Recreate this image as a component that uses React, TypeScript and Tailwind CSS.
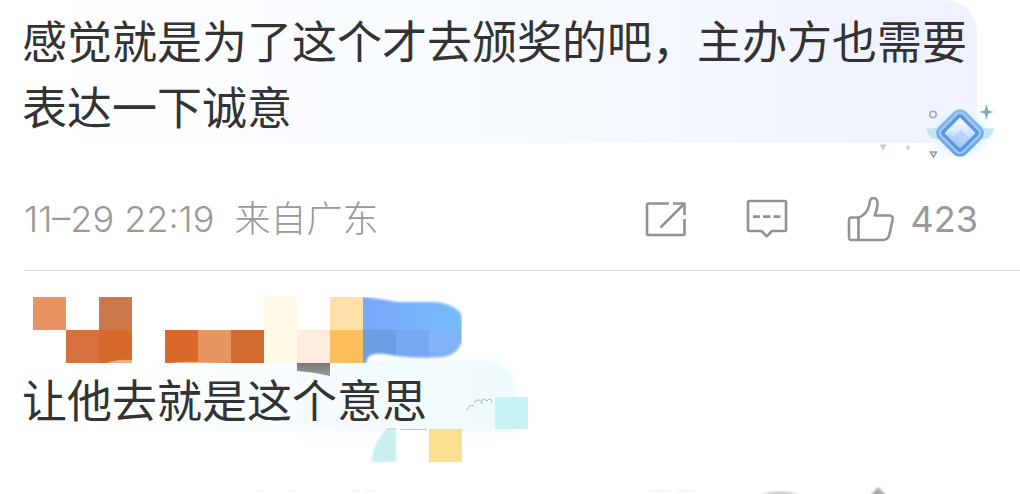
const actionButton = "flex items-center text-[#929292]";
const actionButtonWithCount = "flex items-center gap-4 text-[#929292]";
const commentText = "relative font-['Noto_Sans_CJK_SC',sans-serif] text-[45px] leading-[66px]";

function RepostIcon() {
  return (
    <svg width="42" height="36" viewBox="0 0 42 36" fill="none" stroke="currentColor" strokeWidth="2.6" strokeLinejoin="round" aria-hidden="true">
      <path d="M24 2.5H3.2Q2 2.5 2 3.7V32.8Q2 34 3.2 34H38.3Q39.5 34 39.5 32.8V18" />
      <path d="M28 2.5H39.5V14M38.5 3.5L15.5 26.5" />
    </svg>
  );
}

function CommentIcon() {
  return (
    <svg width="42" height="40" viewBox="0 0 42 40" fill="none" stroke="currentColor" strokeWidth="2.6" strokeLinejoin="round" aria-hidden="true">
      <path d="M3.5 2H38.5Q40 2 40 3.5V30.5Q40 32 38.5 32H26L20.7 37.3L15.5 32H3.5Q2 32 2 30.5V3.5Q2 2 3.5 2Z" />
      <path d="M7 17.6H14M17 17.6H24.5M27.5 17.6H34.5" />
    </svg>
  );
}

function LikeIcon() {
  return (
    <svg width="48" height="46" viewBox="0 0 48 46" fill="none" stroke="currentColor" strokeWidth="2.6" strokeLinejoin="round" aria-hidden="true">
      <path d="M4.5 21.5H11.5Q20 18.5 22 9.5L23 5Q23.6 2 26.5 2Q31 2.3 30.6 8Q30.2 13.5 27.8 19.5H42.5Q46.3 19.7 45.6 24L42.4 38.5Q41 44 36 44H4.5Q2 44 2 41.5V24Q2 21.5 4.5 21.5ZM11.5 21.5V44" />
    </svg>
  );
}

function GemBadge() {
  return (
    <svg width="122" height="64" viewBox="875 98 122 64" className="absolute -bottom-5 -right-5" aria-hidden="true">
      <defs>
        <linearGradient id="gemOuter" x1="0" y1="0" x2="1" y2="1">
          <stop offset="0" stopColor="#91bcec" />
          <stop offset="1" stopColor="#639fe3" />
        </linearGradient>
        <linearGradient id="gemInner" x1="0" y1="0" x2="1" y2="1">
          <stop offset="0" stopColor="#ffffff" />
          <stop offset="0.5" stopColor="#d2e5ff" />
          <stop offset="1" stopColor="#9fc8fa" />
        </linearGradient>
        <radialGradient id="gemGlow">
          <stop offset="0" stopColor="#d8eeff" />
          <stop offset="0.65" stopColor="#e4f5ff" />
          <stop offset="1" stopColor="#f4fbff" stopOpacity="0" />
        </radialGradient>
      </defs>
      <ellipse cx="960" cy="132" rx="35" ry="30" fill="url(#gemGlow)" />
      <path d="M926 127Q934 129 942 124V138H934Q928 136 926 127ZM994 127Q986 129 978 124V138H986Q992 136 994 127Z" fill="#c6e3f4" />
      <rect x="940.5" y="112.5" width="39" height="39" rx="9" transform="rotate(45 960 132)" fill="url(#gemOuter)" />
      <rect x="944.5" y="116.5" width="31" height="31" rx="5" transform="rotate(45 960 132)" fill="#5d98df" stroke="#a3cff9" strokeWidth="2" />
      <rect x="949" y="121" width="22" height="22" rx="1" transform="rotate(45 960 132)" fill="url(#gemInner)" />
      <path d="M946 133L954 135L961 129L969 137L960 146Z" fill="#a9c9f6" opacity="0.6" />
      <path d="M986.5 103L988.2 109.3L993.5 111L988.2 112.7L986.5 119L984.8 112.7L979.5 111L984.8 109.3Z" fill="#82abc1" />
      <circle cx="933" cy="113.5" r="3.2" fill="none" stroke="#90b1c5" strokeWidth="1.5" />
      <path d="M930.5 151H936.5L933.5 156Z" fill="none" stroke="#8ba3b2" strokeWidth="1.6" />
      <path d="M879.5 143.5H886.5L883 149.5Z" fill="#c3ced9" />
      <path d="M908 143.5L910.5 146.5L908 149.5L905.5 146.5Z" fill="#d2d8df" />
    </svg>
  );
}

function NameMosaic() {
  return (
    <svg width="1020" height="223" viewBox="0 271 1020 223" className="absolute left-0 top-0" aria-hidden="true">
      <defs>
        <linearGradient id="replyTint" x1="0" y1="0" x2="1" y2="0">
          <stop offset="0" stopColor="#ffffff" />
          <stop offset="0.5" stopColor="#f6fcfe" />
          <stop offset="1" stopColor="#eefafb" />
        </linearGradient>
        <linearGradient id="sky" x1="0" y1="0" x2="1" y2="0">
          <stop offset="0" stopColor="#78a7fa" />
          <stop offset="1" stopColor="#78bcfd" />
        </linearGradient>
        <linearGradient id="smudge" x1="0" y1="0" x2="0" y2="1">
          <stop offset="0" stopColor="#777777" />
          <stop offset="1" stopColor="#999b9b" />
        </linearGradient>
        <filter id="soft"><feGaussianBlur stdDeviation="1.2" /></filter>
        <filter id="softer"><feGaussianBlur stdDeviation="2" /></filter>
        <clipPath id="nameEdge"><rect x="363" y="290" width="99" height="73" /></clipPath>
        <mask id="brush">
          <path d="M355 297H365Q382 299 398 302L435 302Q450 303 459 311Q463 315 462 330V342Q458 354 444 357Q420 359 396 356Q378 352 371 355Q366 357 366 366H355Z" fill="#ffffff" filter="url(#soft)" />
        </mask>
      </defs>
      <path d="M110 363H330L380 360H485Q514 361 515 390V432H110Z" fill="url(#replyTint)" filter="url(#softer)" />
      <rect x="33" y="297" width="33" height="33" fill="#e99363" />
      <rect x="99" y="297" width="33" height="33" fill="#cc784b" />
      <rect x="66" y="330" width="33" height="33" fill="#d87140" />
      <rect x="99" y="330" width="33" height="33" fill="#d56a2b" />
      <rect x="165" y="330" width="33" height="33" fill="#da682b" />
      <rect x="198" y="330" width="33" height="33" fill="#e79560" />
      <rect x="231" y="330" width="33" height="33" fill="#d36c30" />
      <path d="M106 363Q118 359 132 360V363ZM168 363Q185 361 204 362L222 363Z" fill="#e5b08a" />
      <rect x="264" y="297" width="33" height="66" fill="#fff9e8" />
      <rect x="297" y="330" width="33" height="33" fill="#ffecdf" />
      <rect x="330" y="297" width="33" height="33" fill="#ffe0a9" />
      <rect x="330" y="330" width="33" height="33" fill="#fdbf5d" />
      <g clipPath="url(#nameEdge)">
        <g mask="url(#brush)">
          <rect x="363" y="297" width="99" height="66" fill="url(#sky)" />
          <rect x="363" y="330" width="33" height="33" fill="#6aa0e3" />
          <rect x="396" y="330" width="33" height="33" fill="#76a9f4" />
          <rect x="429" y="330" width="33" height="33" fill="#80b4f6" />
        </g>
      </g>
      <path d="M297 363H330V376Q314 372 297 371Z" fill="url(#smudge)" />
      <path d="M467 410Q469 404 474 406M474 403Q477 398 481 401M481 404Q483 396 487 401Q491 396 492 403M495 404L497 401M505 406L507 401L511 399L509 405" fill="none" stroke="#9fbcb9" strokeWidth="1" />
      <path d="M495 397H528V429H495Z" fill="#c8f4f3" />
      <rect x="396" y="429" width="33" height="33" fill="#ffffff" />
      <path d="M396 429V462H371Q373 446 382 434Q388 429 396 429Z" fill="#c9f0f1" filter="url(#soft)" />
      <rect x="429" y="429" width="33" height="33" fill="#fadf8e" />
      <path d="M386 430Q390 428 396 429M400 429.500H427" fill="none" stroke="#bccac7" strokeWidth="1" />
      <path d="M762 494Q780 490 798 494ZM870 496L878 487L887 496Z" fill="#aaaaaa" filter="url(#soft)" />
      <path d="M256 491H263M289 491H296M352 491H360M365 491H375M650 491H670M677 491H694" stroke="#f5f5f5" strokeWidth="2" />
    </svg>
  );
}

export default function App() {
  return (
    <main className="overflow-hidden bg-white font-['Inter','Noto_Sans_CJK_SC',sans-serif] text-[#333333]">
      <article>
        <div className="relative mr-[43px] rounded-tr-[32px] bg-linear-to-r from-white via-[#f7fbff] to-[#eff2fe] pb-1 pl-[22px] pt-[7px]">
          <p className={commentText}>感觉就是为了这个才去颁奖的吧，主办方也需要表达一下诚意</p>
          <GemBadge />
        </div>
        <footer className="ml-6 flex items-center justify-between border-b border-[#e0e0e0] pb-7 pr-[42px] pt-[53px]">
          <p className="flex gap-5 text-4xl font-light text-[#999999]">
            <time>11–29 22:19</time>
            <span>来自广东</span>
          </p>
          <div className="flex items-center gap-[59px]">
            <button type="button" aria-label="转发" className={actionButton}>
              <RepostIcon />
            </button>
            <button type="button" aria-label="评论" className={actionButton}>
              <CommentIcon />
            </button>
            <button type="button" aria-label="赞" className={actionButtonWithCount}>
              <LikeIcon />
              <span className="text-4xl text-[#999999]">423</span>
            </button>
          </div>
        </footer>
      </article>
      <article className="relative overflow-hidden pb-[62px] pl-[22px] pt-[95px]">
        <NameMosaic />
        <p className={commentText}>让他去就是这个意思</p>
      </article>
    </main>
  );
}
